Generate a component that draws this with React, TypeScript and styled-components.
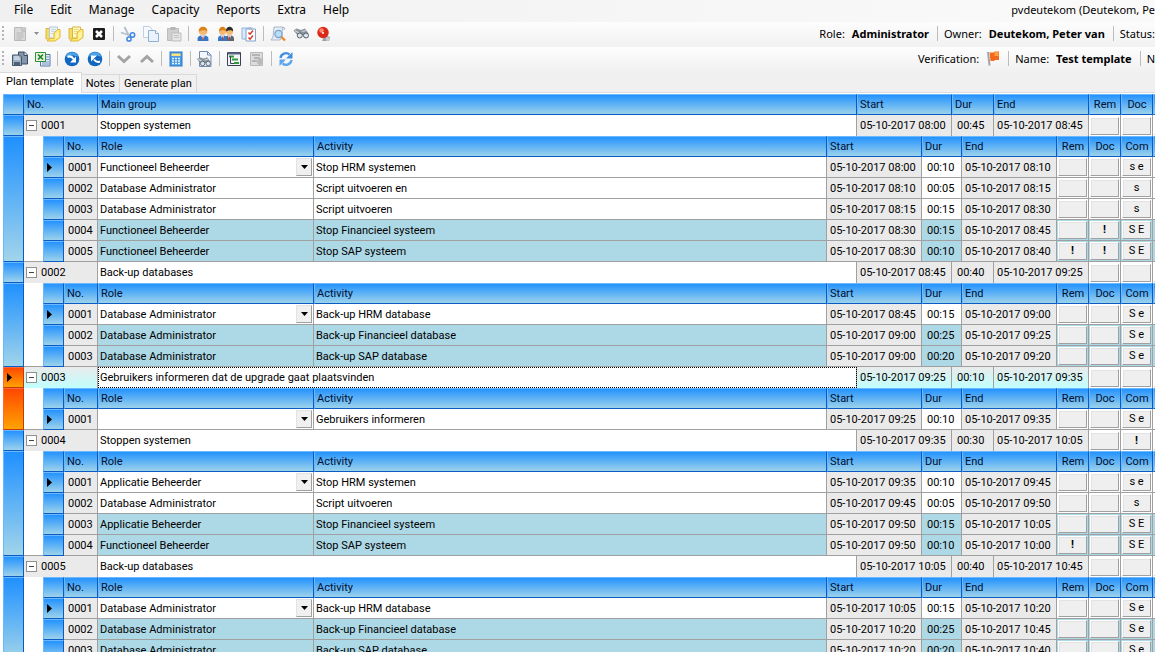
import React from 'react';
import styled, { createGlobalStyle, css } from 'styled-components';

const GlobalStyle = createGlobalStyle`
  *, *::before, *::after { box-sizing: border-box; }
  body {
    margin: 0;
    background: #f0f0f0;
    color: #000;
    font: 11px/14px Roboto, "Liberation Sans", sans-serif;
  }
  button, select { font: inherit; color: inherit; }
`;

/* ---------- window chrome ---------- */

const Window = styled.div`
  display: flex;
  flex-direction: column;
  height: 100vh;
  overflow: hidden;
`;

const MenuBar = styled.nav`
  display: flex;
  align-items: center;
  flex: none;
  gap: 1px;
  height: 22px;
  padding: 0 0 2px 6px;
  background: linear-gradient(to right, #f0f0f0, #fafafa);
  font: 12px/16px "Noto Sans", "Open Sans", sans-serif;
  white-space: nowrap;
`;

const MenuItem = styled.button`
  padding: 0 8px;
  border: 0;
  background: none;
`;

const UserLabel = styled.span`
  margin-left: auto;
  font-size: 11px;
`;

const Toolbar = styled.div`
  display: flex;
  align-items: center;
  flex: none;
  height: 25px;
  padding-bottom: 2px;
  background: linear-gradient(#fdfdfd, #f1f1f1);
  white-space: nowrap;
  font-family: "Noto Sans", "Open Sans", sans-serif;
`;

const Grip = styled.span`
  flex: none;
  width: 2px;
  height: 15px;
  margin: 0 4px 0 2px;
  background: repeating-linear-gradient(#b4b4b4 0 2px, transparent 2px 4px);
`;

const ToolButton = styled.button<{ $narrow?: boolean }>`
  display: flex;
  align-items: center;
  justify-content: center;
  flex: none;
  width: ${(p) => (p.$narrow ? 10 : 23)}px;
  height: 22px;
  padding: 0;
  border: 0;
  background: none;
`;

const Separator = styled.span`
  flex: none;
  width: 1px;
  height: 15px;
  margin: 0 2px 0 3px;
  background: #bdbdbd;
`;

const Info = styled.div`
  display: flex;
  align-items: center;
  margin-left: auto;
`;

const Field = styled.span`
  display: flex;
  align-items: center;
  gap: 7px;
  padding: 0 5px 0 4px;

  &:last-child {
    padding-right: 0;
  }
`;

const Strong = styled.strong`
  font-weight: 700;
`;

/* ---------- tabs ---------- */

const TabStrip = styled.div`
  display: flex;
  align-items: flex-end;
  flex: none;
  height: 21px;
  border-bottom: 1px solid #dcdcdc;
`;

const Tab = styled.button<{ $active?: boolean }>`
  height: 18px;
  padding: 0 4px;
  border: 1px solid #d9d9d9;
  border-width: 1px 1px 0 0;
  background: #f0f0f0;
  line-height: 14px;
  ${(p) =>
    p.$active &&
    css`
      height: 21px;
      padding: 0 7px 2px 6px;
      margin-bottom: -1px;
      background: #fff;
    `}
`;

/* ---------- grid ---------- */

const Pane = styled.main`
  flex: 1;
  min-height: 0;
  overflow: hidden;
  padding: 1px 0 0 3px;
  background: #fff;
`;

const blue = 'linear-gradient(#1e90ff, #a2d5ea)';
const orange = 'linear-gradient(#ff4500, #ffa500)';

const Grid = styled.table<{ $bleed?: boolean }>`
  width: ${(p) => (p.$bleed ? 'calc(100% + 30px)' : '100%')};
  table-layout: fixed;
  border-collapse: separate;
  border-spacing: 0;
`;

const Col = styled.col<{ $w?: number }>`
  ${(p) => p.$w && `width: ${p.$w}px;`}
`;

const HeadCell = styled.th<{ $center?: boolean }>`
  height: 21px;
  padding: 1px 2px 0;
  border: 1px solid #6cb8ff;
  border-right-color: #0a5cc4;
  border-bottom-color: #0a5cc4;
  background: ${blue};
  background-origin: border-box;
  color: #001030;
  font-weight: 400;
  text-align: ${(p) => (p.$center ? 'center' : 'left')};
  white-space: nowrap;
`;

const Selector = styled.td<{ $current?: boolean }>`
  height: 21px;
  padding: 0 0 0 3px;
  border: 1px solid ${(p) => (p.$current ? '#ff6a3c' : '#6cb8ff')};
  border-right-color: ${(p) => (p.$current ? '#c43a0a' : '#0a5cc4')};
  border-bottom-color: ${(p) => (p.$current ? '#c43a0a' : '#0a5cc4')};
  background: ${(p) => (p.$current ? orange : blue)};
  background-origin: border-box;
`;

const Marker = styled.svg`
  display: block;
`;

type Tone = 'plain' | 'fixed' | 'parallel' | 'focus';

const tones: Record<Tone, string> = {
  plain: '#fff',
  fixed: '#eaeaea',
  parallel: '#add8e6',
  focus: 'linear-gradient(#eaeaea, #c0ffff)',
};

const Cell = styled.td<{ $tone?: Tone; $group?: boolean }>`
  height: 21px;
  padding: ${(p) => (p.$group ? 0 : 1)}px 2px 0;
  border-right: 1px solid #a0a0a0;
  border-bottom: ${(p) => (p.$group ? '0' : '1px solid #a0a0a0')};
  background: ${(p) => tones[p.$tone ?? 'plain']};
  white-space: nowrap;
  overflow: hidden;
`;

const NameCell = styled(Cell)<{ $focused?: boolean }>`
  ${(p) =>
    p.$focused &&
    css`
      outline: 1px dotted #000;
      outline-offset: -1px;
    `}
`;

const PickerCell = styled(Cell)`
  padding-top: 0;
`;

const TimeCell = styled(Cell)`
  padding-left: 3px;
`;

const DurCell = styled(Cell)`
  padding-left: 5px;
`;

const NumberCell = styled(Cell)`
  padding-left: 4px;
`;

const ButtonCell = styled(Cell)`
  padding: 1px;
`;

const CellButton = styled.button<{ $alert?: boolean }>`
  display: block;
  width: 100%;
  height: 18px;
  padding: 0;
  border: 1px solid #fff;
  border-right-color: #a0a0a0;
  border-bottom-color: #a0a0a0;
  background: #efefef;
  box-shadow: inset 1px 1px #e3e3e3;
  font-weight: ${(p) => (p.$alert ? 700 : 400)};
  line-height: 14px;
  text-align: center;
`;

const NumberBox = styled.div`
  display: flex;
  align-items: center;
  gap: 4px;
`;

const Expander = styled.button`
  display: flex;
  width: 11px;
  height: 11px;
  padding: 0;
  align-items: center;
  justify-content: center;
  border: 1px solid #919191;
  background: #fff;
`;

const Minus = styled.span`
  width: 5px;
  height: 1px;
  background: #444;
`;

const NestedCell = styled.td`
  padding: 0 0 0 19px;
  background: #fff;
  box-shadow: inset 0 -1px #a0a0a0;
`;

const Picker = styled.div`
  display: grid;
  align-items: center;
  margin-right: -1px;
`;

const RoleSelect = styled.select`
  grid-area: 1 / 1;
  width: 100%;
  height: 18px;
  padding: 1px 0 0;
  border: 0;
  border-radius: 0;
  background: transparent;
  appearance: none;
  outline: 0;
`;

const DropMark = styled.span`
  grid-area: 1 / 1;
  justify-self: end;
  display: flex;
  align-items: center;
  justify-content: center;
  width: 16px;
  height: 18px;
  border: 1px solid #e3e3e3;
  border-right-color: #a0a0a0;
  border-bottom-color: #a0a0a0;
  background: #f0f0f0;
  pointer-events: none;
`;

/* ---------- icons ---------- */

const Svg = ({ children, w = 16 }: { children: React.ReactNode; w?: number }) => (
  <svg width={w} height={16} viewBox={`0 0 ${w} 16`} fill="none" aria-hidden="true">
    {children}
  </svg>
);

const NewIcon = () => (
  <Svg>
    <path d="M2.5 1.5h8l3 3v10h-11z" fill="#d8d8d8" stroke="#b8b8b8" />
    <path d="M10 1.500v3.500h3.500" stroke="#a9a9a9" fill="#eee" />
    <path d="M4.500 7h7M4.500 9h7M4.500 11h7M4.500 13h5" stroke="#b8b8b8" />
    <circle cx="12.500" cy="3" r="2" fill="#c6c6c6" />
  </Svg>
);
const FolderIcon = ({ open }: { open?: boolean }) => (
  <Svg>
    <path d="M1 2.500h4l1 1.500v9H1z" fill="#f6dc5c" stroke="#dcb848" />
    <path d="M4.500 1h8v11h-8z" fill={open ? '#fff8c8' : '#edf3fa'} stroke={open ? '#d8b63c' : '#b8c6d6'} />
    <path d="M6 3.500h5M6 5.500h5M6 7.500h5" stroke={open ? '#ecd880' : '#c9d6e4'} />
    <path d="M12.500 3.500h2.500v8l-5 3.500H2l3-2.500h4V7z" fill="#ffe76a" stroke="#dfb93c" />
    <path d="M10.500 7.500l3.500-2.500v6l-3.500 2.500z" fill="#fff3a4" />
  </Svg>
);
const CloseIcon = () => (
  <Svg>
    <rect x="2" y="2" width="12" height="12" rx="1" fill="#1c1c1c" />
    <path d="M5 5l6 6M11 5l-6 6" stroke="#fff" strokeWidth="2.600" />
  </Svg>
);
const CutIcon = () => (
  <Svg>
    <path d="M4.500 1l4.500 9M1 6.500l9 3" stroke="#b4bfcb" strokeWidth="1.800" />
    <circle cx="12.500" cy="9" r="2.200" stroke="#3f87e0" strokeWidth="1.500" />
    <circle cx="9" cy="13" r="2.100" stroke="#3f87e0" strokeWidth="1.500" />
  </Svg>
);
const CopyIcon = () => (
  <Svg>
    <path d="M.5.5h6L9 3v8.500H.5z" fill="#f6faff" stroke="#bdd0e6" />
    <path d="M5.500 4.500h7l3 3v8h-10z" fill="#eaf3fd" stroke="#8fb0d4" />
    <path d="M12.500 4.500v3h3" stroke="#8fb0d4" fill="#fff" />
  </Svg>
);
const PasteIcon = () => (
  <Svg>
    <path d="M1.500 2.500h11v12h-11z" fill="#cfcfcf" stroke="#bcbcbc" />
    <path d="M4.500 1h5v3h-5z" fill="#b5b5b5" />
    <path d="M6 7h9v8H6z" fill="#e6e6e6" stroke="#bdbdbd" />
    <path d="M8 9.500h5M8 11.500h5" stroke="#c2c2c2" />
  </Svg>
);
const Person = ({ hair, coat, x = 0 }: { hair: string; coat: string; x?: number }) => (
  <g transform={`translate(${x} 0)`}>
    <path d="M1.500 15v-2.500C1.500 10 4 9.500 6 9.500s4.500.5 4.500 3V15z" fill={coat} />
    <path d="M4.500 9.500L6 14l1.500-4.500z" fill="#fff" />
    <path d="M6 10.500v4" stroke="#d43a22" />
    <circle cx="6" cy="5.500" r="3.500" fill="#f5b873" />
    <path d="M2.500 5.500C2.200 2.500 4 .8 6 .8s3.900 1.500 3.500 4.700C8 3.500 5 4 2.500 5.500z" fill={hair} />
  </g>
);
const UserIcon = () => (
  <Svg>
    <g transform="translate(.8 0) scale(1.200 1)">
      <Person hair="#d98418" coat="#2f78cc" />
    </g>
  </Svg>
);
const UsersIcon = () => (
  <Svg>
    <Person hair="#2c2c2c" coat="#5d6670" x={5.5} />
    <Person hair="#d98418" coat="#2f78cc" x={-1.5} />
  </Svg>
);
const ChecklistIcon = () => (
  <Svg>
    <path d="M1 2h9v11H1z" fill="#dceafa" stroke="#8fb3dc" />
    <path d="M5 3h9.500v12H5z" fill="#fff" stroke="#7fa3cc" />
    <path d="M7.500 1.500h4v2h-4z" fill="#9fb6d0" />
    <path d="M7.500 6.500L9 8.200l3-3.700M7.500 11.500L9 13.200l3-3.700" stroke="#d8321e" strokeWidth="1.400" />
  </Svg>
);
const SearchIcon = () => (
  <Svg>
    <path d="M4 1h9l-1 4v6l-2 3H1l2-3z" fill="#e6edf6" stroke="#a9b8cc" />
    <path d="M11 10.500l4 4" stroke="#ee8a2c" strokeWidth="2.400" />
    <circle cx="8.500" cy="8" r="3.600" fill="#b4defa" stroke="#7c9fc4" strokeWidth="1.200" />
    <path d="M13 1l2 1.500L13.500 4" stroke="#9aa6c8" />
  </Svg>
);
const Binoculars = () => (
  <>
    <path d="M.5 4.500l3-2L8 4l4-1.500 3.500 5L14 10l-3-1H8l-2 2z" fill="#8b949c" />
    <path d="M2 4.500l4 2.500M9 5.500l4-1" stroke="#cdd4da" strokeWidth="1.200" />
    <circle cx="6.800" cy="9.500" r="2.500" fill="#dbe7f0" stroke="#57606a" />
    <circle cx="13" cy="9.500" r="2.500" fill="#dbe7f0" stroke="#57606a" />
  </>
);
const BinocularsIcon = () => (
  <Svg>
    <Binoculars />
  </Svg>
);
const BellIcon = () => (
  <Svg>
    <path d="M9 9l5 2-1 4H6z" fill="#9aa0a8" />
    <circle cx="11.500" cy="13" r="2" fill="#c4c9cf" />
    <circle cx="7" cy="6.500" r="5.700" fill="#dc2a1a" />
    <circle cx="5.500" cy="4.500" r="2.200" fill="#ff8a72" />
    <circle cx="7" cy="7" r="1" fill="#fff" />
  </Svg>
);
const PagesIcon = () => (
  <Svg>
    <path d="M6.500 1h6l3 3v9h-9z" fill="#8496ac" stroke="#3b4a5e" />
    <path d="M12 1v3.500h3.500" fill="#d8e2ee" stroke="#3b4a5e" />
    <path d="M.5 4h7l2 2v8.500h-9z" fill="#9fb0c4" stroke="#44576c" />
    <path d="M2 6h5M2 8h6" stroke="#e9f0f8" />
    <path d="M2 11h6v3H2z" fill="#4d6078" />
  </Svg>
);
const ExcelIcon = () => (
  <Svg>
    <path d="M5.500 3.500h9.500V15H5.500z" fill="#e8f0fa" stroke="#5577a8" />
    <path d="M10 6h4M10 8.500h4M7 11h7M7 13h7" stroke="#6f93c4" />
    <path d="M.5 1.500h10v9H.5z" fill="#e6f5dc" stroke="#2f8f3a" />
    <path d="M3 3.500l5 5M8 3.500l-5 5" stroke="#23802c" strokeWidth="1.700" />
  </Svg>
);
const Disc = ({ back }: { back?: boolean }) => (
  <Svg>
    <circle cx="8" cy="8" r="7.300" fill="#1268c0" />
    <path d="M1.500 6a6.800 6.800 0 0 1 13 0c-4-2-9-2-13 0z" fill="#4ba3ea" />
    {back ? (
      <>
        <path d="M13 10.500c-2 .8-4.500.2-6-2" stroke="#fff" strokeWidth="2" />
        <path d="M4 4.500h6L4 10.500z" fill="#fff" />
      </>
    ) : (
      <>
        <path d="M3.500 6c2-1 4.500-.5 6 2" stroke="#fff" strokeWidth="2" />
        <path d="M12 5.500v6H6z" fill="#fff" />
      </>
    )}
  </Svg>
);
const ChevronIcon = ({ up }: { up?: boolean }) => (
  <Svg>
    <path d={up ? 'M2 11l6-5.500 6 5.500' : 'M2 5l6 5.500L14 5'} stroke="#a3a3a3" strokeWidth="3" />
  </Svg>
);
const CalculatorIcon = () => (
  <Svg>
    <rect x="2" y="1" width="12" height="14" fill="#4b9be6" stroke="#2c78c4" />
    <path d="M3.500 2.500h9v2.500h-9z" fill="#ffe37a" />
    <path d="M4 7.500h8M4 10h8M4 12.500h8" stroke="#e3f2ff" strokeWidth="1.500" strokeDasharray="2 1" />
  </Svg>
);
const FindPageIcon = () => (
  <Svg>
    <path d="M2.500.5h8l3.500 3.500v11.500H2.500z" fill="#f4f8fd" stroke="#6e8cb4" />
    <path d="M10.500.5V4H14" stroke="#6e8cb4" />
    <g transform="translate(-.5 4) scale(.9)">
      <Binoculars />
    </g>
  </Svg>
);
const GanttIcon = () => (
  <Svg>
    <path d="M1.500 1.500h13v13h-13z" fill="#f2f6fb" stroke="#3c4254" />
    <path d="M2 2.500h12" stroke="#5a6488" strokeWidth="2" />
    <path d="M3 5.500h5M6 8.500h6M8 12h5" stroke="#2f9a38" strokeWidth="2" />
    <path d="M4.500 5v7.500H8" stroke="#3c4254" />
  </Svg>
);
const GanttOffIcon = () => (
  <Svg>
    <path d="M1.500 1.500h12v13h-12z" fill="#dcdcdc" stroke="#b8b8b8" />
    <path d="M3 4h8M5 7h6M3 10h5" stroke="#a6a6a6" strokeWidth="1.500" />
    <path d="M9 7.500h4v5l-2 2.500-3-3z" fill="#bababa" />
  </Svg>
);
const RefreshIcon = () => (
  <Svg>
    <path d="M2.500 7A5.500 5.500 0 0 1 11.500 3.500" stroke="#3f8fe0" strokeWidth="2.400" />
    <path d="M14.500 1v6.500H8z" fill="#3f8fe0" />
    <path d="M13.500 9a5.500 5.500 0 0 1-9 3.500" stroke="#5aa7ee" strokeWidth="2.400" />
    <path d="M1.500 15V8.500H8z" fill="#5aa7ee" />
  </Svg>
);
const FlagIcon = () => (
  <Svg w={14}>
    <path d="M1 1h2l1.500 13.500h-2z" fill="#a4a4a4" />
    <path d="M3.500 1.500h4l1-1H13v8.500H9l-1 1H4.500z" fill="#f4681c" />
    <path d="M8.500 1h4v4h-4z" fill="#ffa03c" />
  </Svg>
);

const RowArrow = () => (
  <Marker width="5" height="9" viewBox="0 0 5 9" aria-hidden="true">
    <path d="M0 0l5 4.500L0 9z" fill="#000" />
  </Marker>
);

/* ---------- data ---------- */

type Activity = {
  role: string;
  text: string;
  start: string;
  dur: string;
  end: string;
  rem?: string;
  doc?: string;
  com: string;
  parallel?: boolean;
};
type Group = { name: string; start: string; dur: string; end: string; doc?: string; items: Activity[] };

const FB = 'Functioneel Beheerder';
const DA = 'Database Administrator';
const AB = 'Applicatie Beheerder';

const groups: Group[] = [
  {
    name: 'Stoppen systemen', start: '08:00', dur: '00:45', end: '08:45',
    items: [
      { role: FB, text: 'Stop HRM systemen', start: '08:00', dur: '00:10', end: '08:10', com: 's e' },
      { role: DA, text: 'Script uitvoeren en', start: '08:10', dur: '00:05', end: '08:15', com: 's' },
      { role: DA, text: 'Script uitvoeren', start: '08:15', dur: '00:15', end: '08:30', com: 's' },
      { role: FB, text: 'Stop Financieel systeem', start: '08:30', dur: '00:15', end: '08:45', doc: '!', com: 'S E', parallel: true },
      { role: FB, text: 'Stop SAP systeem', start: '08:30', dur: '00:10', end: '08:40', rem: '!', doc: '!', com: 'S E', parallel: true },
    ],
  },
  {
    name: 'Back-up databases', start: '08:45', dur: '00:40', end: '09:25',
    items: [
      { role: DA, text: 'Back-up HRM database', start: '08:45', dur: '00:15', end: '09:00', com: 'S e' },
      { role: DA, text: 'Back-up Financieel database', start: '09:00', dur: '00:25', end: '09:25', com: 'S e', parallel: true },
      { role: DA, text: 'Back-up SAP database', start: '09:00', dur: '00:20', end: '09:20', com: 'S e', parallel: true },
    ],
  },
  {
    name: 'Gebruikers informeren dat de upgrade gaat plaatsvinden', start: '09:25', dur: '00:10', end: '09:35',
    items: [{ role: '', text: 'Gebruikers informeren', start: '09:25', dur: '00:10', end: '09:35', com: 'S e' }],
  },
  {
    name: 'Stoppen systemen', start: '09:35', dur: '00:30', end: '10:05', doc: '!',
    items: [
      { role: AB, text: 'Stop HRM systemen', start: '09:35', dur: '00:10', end: '09:45', com: 's e' },
      { role: DA, text: 'Script uitvoeren', start: '09:45', dur: '00:05', end: '09:50', com: 's' },
      { role: AB, text: 'Stop Financieel systeem', start: '09:50', dur: '00:15', end: '10:05', com: 'S E', parallel: true },
      { role: FB, text: 'Stop SAP systeem', start: '09:50', dur: '00:10', end: '10:00', rem: '!', com: 'S E', parallel: true },
    ],
  },
  {
    name: 'Back-up databases', start: '10:05', dur: '00:40', end: '10:45',
    items: [
      { role: DA, text: 'Back-up HRM database', start: '10:05', dur: '00:15', end: '10:20', com: 'S e' },
      { role: DA, text: 'Back-up Financieel database', start: '10:20', dur: '00:25', end: '10:45', com: 'S e', parallel: true },
      { role: DA, text: 'Back-up SAP database', start: '10:20', dur: '00:20', end: '10:40', com: 'S e', parallel: true },
    ],
  },
];

const CURRENT = 2;
const no = (i: number) => String(i + 1).padStart(4, '0');
const at = (time: string) => `05-10-2017 ${time}`;

/* ---------- parts ---------- */

type Tool = { label: string; icon: React.ReactNode; narrow?: boolean } | null;

const fileTools: Tool[] = [
  { label: 'New', icon: <NewIcon /> },
  {
    label: 'New options',
    narrow: true,
    icon: (
      <svg width="5" height="3" viewBox="0 0 5 3" aria-hidden="true">
        <path d="M0 0h5L2.500 3z" fill="#8c8c8c" />
      </svg>
    ),
  },
  { label: 'Open', icon: <FolderIcon /> },
  { label: 'Open template', icon: <FolderIcon open /> },
  { label: 'Close', icon: <CloseIcon /> },
  null,
  { label: 'Cut', icon: <CutIcon /> },
  { label: 'Copy', icon: <CopyIcon /> },
  { label: 'Paste', icon: <PasteIcon /> },
  null,
  { label: 'User', icon: <UserIcon /> },
  { label: 'Users', icon: <UsersIcon /> },
  { label: 'Checklist', icon: <ChecklistIcon /> },
  null,
  { label: 'Preview', icon: <SearchIcon /> },
  { label: 'Find', icon: <BinocularsIcon /> },
  { label: 'Alarm', icon: <BellIcon /> },
];

const planTools: Tool[] = [
  { label: 'Duplicate', icon: <PagesIcon /> },
  { label: 'Export to Excel', icon: <ExcelIcon /> },
  null,
  { label: 'Indent', icon: <Disc /> },
  { label: 'Outdent', icon: <Disc back /> },
  null,
  { label: 'Move down', icon: <ChevronIcon /> },
  { label: 'Move up', icon: <ChevronIcon up /> },
  null,
  { label: 'Calculate', icon: <CalculatorIcon /> },
  null,
  { label: 'Find in plan', icon: <FindPageIcon /> },
  null,
  { label: 'Gantt chart', icon: <GanttIcon /> },
  { label: 'Gantt options', icon: <GanttOffIcon /> },
  null,
  { label: 'Refresh', icon: <RefreshIcon /> },
];

const Tools = ({ items }: { items: Tool[] }) => (
  <>
    <Grip />
    {items.map((t, i) =>
      t ? (
        <ToolButton key={i} aria-label={t.label} $narrow={t.narrow}>
          {t.icon}
        </ToolButton>
      ) : (
        <Separator key={i} />
      ),
    )}
  </>
);

const ActionCell = ({ label, value, tone, group }: { label: string; value?: string; tone?: Tone; group?: boolean }) => (
  <ButtonCell $tone={tone} $group={group}>
    <CellButton aria-label={label} $alert={value === '!'}>
      {value ?? '\u00a0'}
    </CellButton>
  </ButtonCell>
);

const RolePicker = ({ value }: { value: string }) => (
  <Picker>
    <RoleSelect aria-label="Role" defaultValue={value}>
      {['', FB, DA, AB].map((r) => (
        <option key={r}>{r}</option>
      ))}
    </RoleSelect>
    <DropMark>
      <svg width="7" height="4" viewBox="0 0 7 4" aria-hidden="true">
        <path d="M0 0h7L3.500 4z" fill="#000" />
      </svg>
    </DropMark>
  </Picker>
);

const Activities = ({ items }: { items: Activity[] }) => (
  <Grid>
    <colgroup>
      {[21, 34, 216, 0, 95, 40, 95, 32, 32, 32, 32].map((w, i) => (
        <Col key={i} $w={w} />
      ))}
    </colgroup>
    <thead>
      <tr>
        <HeadCell />
        <HeadCell>No.</HeadCell>
        <HeadCell>Role</HeadCell>
        <HeadCell>Activity</HeadCell>
        <HeadCell>Start</HeadCell>
        <HeadCell>Dur</HeadCell>
        <HeadCell>End</HeadCell>
        <HeadCell $center>Rem</HeadCell>
        <HeadCell $center>Doc</HeadCell>
        <HeadCell $center>Com</HeadCell>
        <HeadCell />
      </tr>
    </thead>
    <tbody>
      {items.map((a, i) => {
        const tone: Tone = a.parallel ? 'parallel' : 'plain';
        return (
          <tr key={i}>
            <Selector>{i === 0 && <RowArrow />}</Selector>
            <NumberCell $tone="fixed">{no(i)}</NumberCell>
            {i === 0 ? (
              <PickerCell $tone={tone}>
                <RolePicker value={a.role} />
              </PickerCell>
            ) : (
              <Cell $tone={tone}>{a.role}</Cell>
            )}
            <Cell $tone={tone}>{a.text}</Cell>
            <TimeCell $tone="fixed">{at(a.start)}</TimeCell>
            <DurCell $tone={tone}>{a.dur}</DurCell>
            <TimeCell $tone="fixed">{at(a.end)}</TimeCell>
            <ActionCell label="Remark" value={a.rem} tone={tone} />
            <ActionCell label="Document" value={a.doc} tone={tone} />
            <ActionCell label="Communication" value={a.com} tone={tone} />
            <Cell $tone={tone} />
          </tr>
        );
      })}
    </tbody>
  </Grid>
);

const GroupRows = ({ group, index }: { group: Group; index: number }) => {
  const current = index === CURRENT;
  const tone: Tone = current ? 'focus' : 'fixed';
  return (
    <>
      <tr>
        <Selector $current={current}>{current && <RowArrow />}</Selector>
        <Cell $group $tone={tone}>
          <NumberBox>
            <Expander aria-label={`Collapse ${no(index)}`}>
              <Minus />
            </Expander>
            {no(index)}
          </NumberBox>
        </Cell>
        <NameCell $group $focused={current}>{group.name}</NameCell>
        <TimeCell $group $tone={tone}>{at(group.start)}</TimeCell>
        <DurCell $group $tone={tone}>{group.dur}</DurCell>
        <TimeCell $group $tone={tone}>{at(group.end)}</TimeCell>
        <ActionCell group label="Remark" />
        <ActionCell group label="Document" value={group.doc} />
        <ActionCell group label="Communication" />
      </tr>
      <tr>
        <Selector $current={current} />
        <NestedCell colSpan={8}>
          <Activities items={group.items} />
        </NestedCell>
      </tr>
    </>
  );
};

export default function App() {
  return (
    <Window>
      <GlobalStyle />
      <MenuBar>
        {['File', 'Edit', 'Manage', 'Capacity', 'Reports', 'Extra', 'Help'].map((m) => (
          <MenuItem key={m}>{m}</MenuItem>
        ))}
        <UserLabel>pvdeutekom (Deutekom, Pe</UserLabel>
      </MenuBar>
      <Toolbar>
        <Tools items={fileTools} />
        <Info>
          <Field>Role: <Strong>Administrator</Strong></Field>
          <Separator />
          <Field>Owner: <Strong>Deutekom, Peter van</Strong></Field>
          <Separator />
          <Field>Status:</Field>
        </Info>
      </Toolbar>
      <Toolbar>
        <Tools items={planTools} />
        <Info>
          <Field>Verification: <FlagIcon /></Field>
          <Separator />
          <Field>Name: <Strong>Test template</Strong></Field>
          <Separator />
          <Field>N</Field>
        </Info>
      </Toolbar>
      <TabStrip role="tablist">
        <Tab role="tab" aria-selected $active>Plan template</Tab>
        <Tab role="tab">Notes</Tab>
        <Tab role="tab">Generate plan</Tab>
      </TabStrip>
      <Pane>
        <Grid $bleed>
          <colgroup>
            {[21, 74, 0, 95, 42, 95, 32, 32, 32].map((w, i) => (
              <Col key={i} $w={w} />
            ))}
          </colgroup>
          <thead>
            <tr>
              <HeadCell />
              <HeadCell>No.</HeadCell>
              <HeadCell>Main group</HeadCell>
              <HeadCell>Start</HeadCell>
              <HeadCell>Dur</HeadCell>
              <HeadCell>End</HeadCell>
              <HeadCell $center>Rem</HeadCell>
              <HeadCell $center>Doc</HeadCell>
              <HeadCell />
            </tr>
          </thead>
          <tbody>
            {groups.map((g, i) => (
              <GroupRows key={i} group={g} index={i} />
            ))}
          </tbody>
        </Grid>
      </Pane>
    </Window>
  );
}
